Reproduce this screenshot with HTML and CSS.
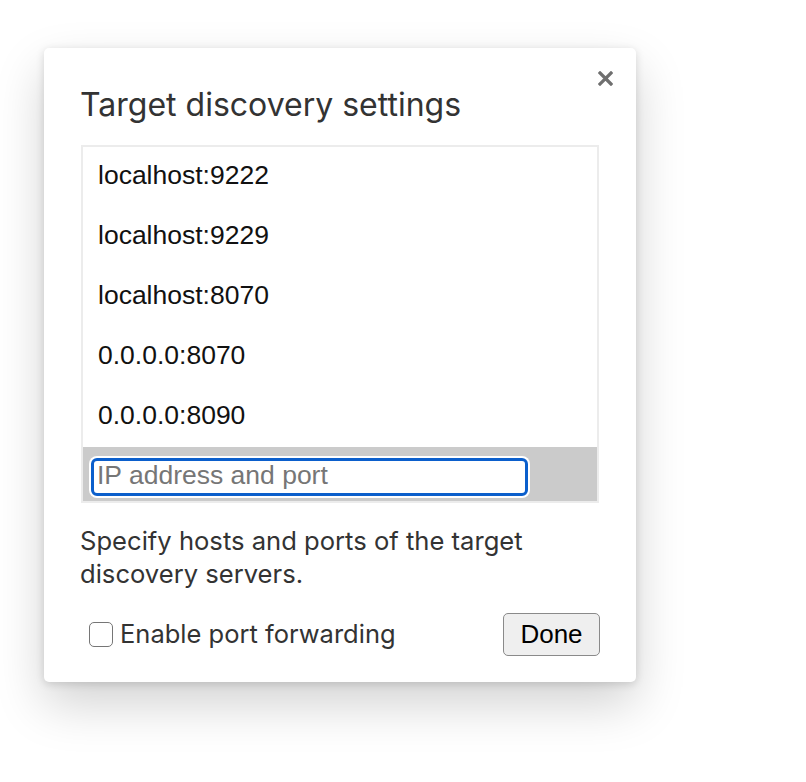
FILE: index.html
```html
<!DOCTYPE html>
<html lang="en">
<head>
<meta charset="utf-8">
<title>Target discovery settings</title>
<link rel="stylesheet" href="styles.css">
</head>
<body>
<div class="dialog">
  <button class="close" aria-label="Close">
    <svg width="15" height="15" viewBox="0 0 15 15"><path d="M2 2 L13 13 M13 2 L2 13" stroke="#6f6f6f" stroke-width="3.2" stroke-linecap="square"/></svg>
  </button>
  <h1 class="title">Target discovery settings</h1>
  <div class="list">
    <div class="row">localhost:9222</div>
    <div class="row">localhost:9229</div>
    <div class="row">localhost:8070</div>
    <div class="row">0.0.0.0:8070</div>
    <div class="row">0.0.0.0:8090</div>
    <div class="input-row">
      <input class="addr" type="text" placeholder="IP address and port">
    </div>
  </div>
  <p class="desc">Specify hosts and ports of the target discovery servers.</p>
  <div class="footer">
    <label class="check"><span class="box"></span><span class="check-label">Enable port forwarding</span></label>
    <button class="done">Done</button>
  </div>
</div>
</body>
</html>
```

FILE: styles.css
```css
html, body {
  margin: 0;
  padding: 0;
  background: #fff;
}
body {
  box-sizing: border-box;
  min-height: 782px;
  padding: 48px 0 0 44px;
  font-family: "Liberation Sans", Arial, sans-serif;
}
.dialog {
  position: relative;
  box-sizing: border-box;
  width: 592px;
  height: 634px;
  padding: 37px 36px 0 36px;
  background: #fff;
  border-radius: 5px;
  box-shadow: 0 22px 50px rgba(0, 0, 0, 0.18), 0 2px 8px rgba(0, 0, 0, 0.14);
}
.close {
  position: absolute;
  top: 23px;
  right: 23px;
  width: 15px;
  height: 15px;
  padding: 0;
  border: 0;
  background: none;
  display: block;
}
.close svg { display: block; }
.title {
  margin: 0;
  font-family: Inter, "Liberation Sans", sans-serif;
  font-weight: 400;
  font-size: 32px;
  line-height: 40px;
  color: #333;
}
.list {
  margin: 20px 1px 0 1px;
  border: 2px solid #ececec;
  background: #fff;
}
.row {
  height: 60px;
  padding-left: 15px;
  display: flex;
  align-items: center;
  font-size: 26.5px;
  color: #111;
  position: relative;
  top: -2px;
}
.input-row {
  height: 54px;
  background: #cbcbcb;
  box-sizing: border-box;
  padding: 11px 0 0 8px;
}
.addr {
  box-sizing: border-box;
  display: block;
  width: 437px;
  height: 38px;
  margin: 0;
  padding: 0 0 3px 3px;
  border: 3px solid #0b5fcc;
  border-radius: 6px;
  box-shadow: 0 0 0 2px #fff;
  outline: none;
  background: #fff;
  font-family: "Liberation Sans", Arial, sans-serif;
  font-size: 26.5px;
  color: #111;
}
.addr::placeholder { color: #767676; }
.desc {
  margin: 21px 0 0 0;
  font-family: Inter, "Liberation Sans", sans-serif;
  font-size: 25.6px;
  line-height: 33px;
  color: #333;
  width: 500px;
}
.footer {
  margin-top: 23px;
  display: flex;
  align-items: center;
  justify-content: space-between;
  height: 42px;
}
.check {
  display: flex;
  align-items: center;
  margin-left: 9px;
  margin-top: 1px;
}
.box {
  box-sizing: border-box;
  width: 24px;
  height: 25px;
  border: 1.5px solid #767676;
  border-radius: 5px;
  background: #fff;
}
.check-label {
  margin-left: 7px;
  font-family: Inter, "Liberation Sans", sans-serif;
  font-size: 25.5px;
  color: #333;
  position: relative;
  top: -1px;
}
.done {
  box-sizing: border-box;
  width: 97px;
  height: 43px;
  padding: 0;
  border: 1.5px solid #8a8a8a;
  border-radius: 5px;
  background: #efefef;
  font-family: "Liberation Sans", Arial, sans-serif;
  font-size: 26px;
  color: #000;
}
```
